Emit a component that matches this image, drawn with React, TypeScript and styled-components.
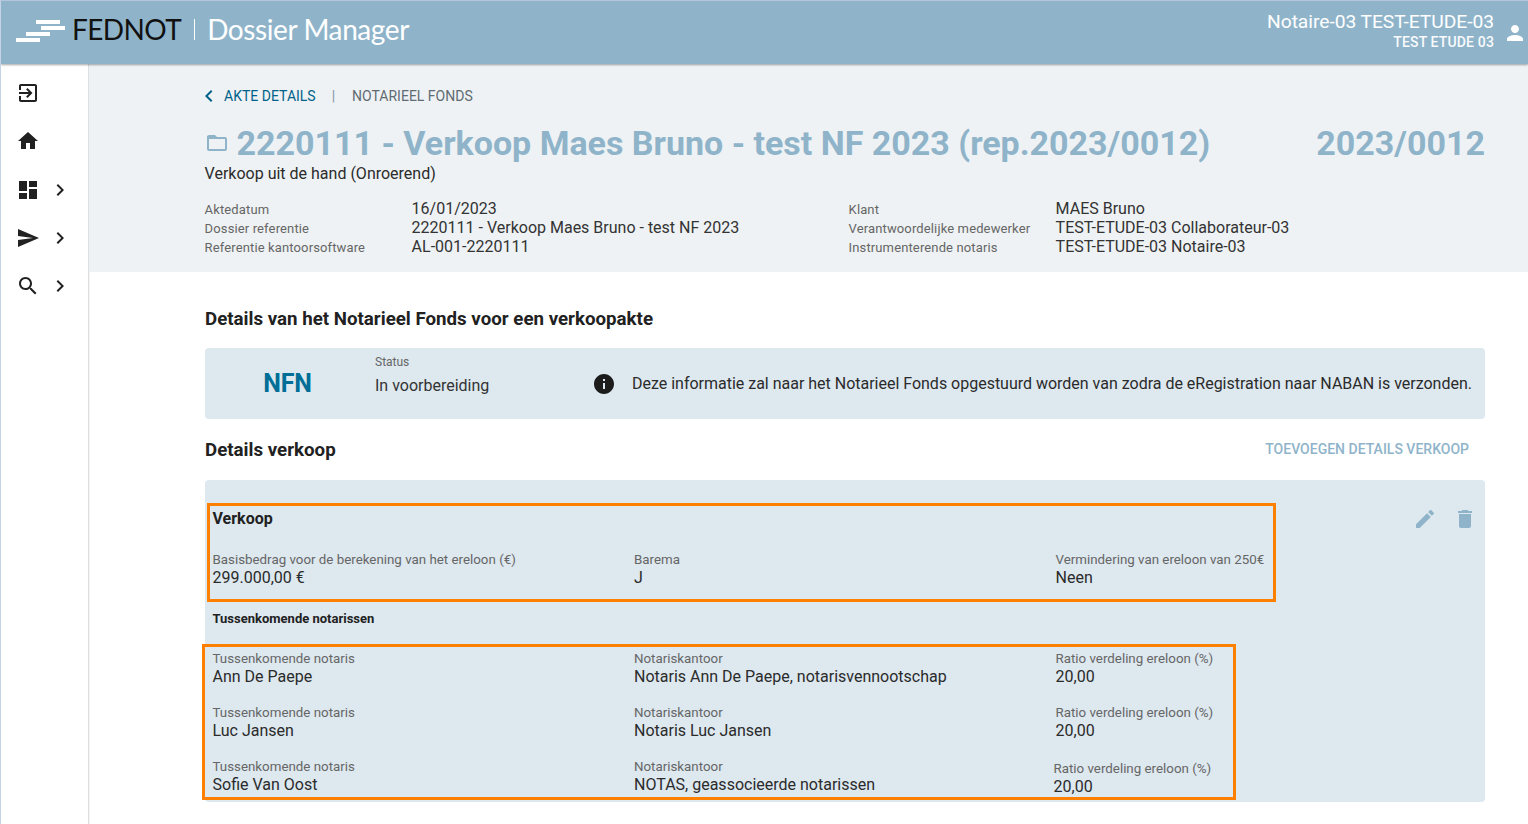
import React from 'react';
import styled, { createGlobalStyle } from 'styled-components';

const Global = createGlobalStyle`
  html, body { margin: 0; padding: 0; height: 100%; overflow: hidden; background: #fff; }
  body { font-family: Roboto, "Liberation Sans", sans-serif; color: #212121; }
  * { box-sizing: border-box; }
`;

const BLUE = '#8fb4ca';

const Page = styled.div`
  width: 1528px; height: 824px; display: flex; flex-direction: column;
  border-left: 1px solid #c5d3e6; border-top: 1px solid #b5c5dc; overflow: hidden;
`;
const Header = styled.header`
  height: 63px; flex: none; background: ${BLUE}; display: flex; align-items: center;
  justify-content: space-between; padding: 0 1px 0 15px; position: relative; z-index: 2;
  box-shadow: 0 1px 2px rgba(0,0,0,.35);
`;
const Brand = styled.div`display: flex; align-items: center; height: 100%;`;
const LogoMark = styled.svg`width: 49px; height: 22px; flex: none; margin-right: 7px; margin-top: -3px;`;
const Fednot = styled.span`
  font-family: Lato, sans-serif; font-size: 28px; font-weight: 400; color: #111; letter-spacing: -.6px; line-height: 1; margin-top: -7px;
`;
const Divider = styled.span`width: 1px; height: 21px; background: #fff; margin: -6px 12px 0 13px;`;
const Product = styled.span`
  font-family: Lato, sans-serif; font-size: 28px; font-weight: 400; color: #fff; letter-spacing: -.4px; line-height: 1; margin-top: -7px;
`;
const UserArea = styled.div`display: flex; align-items: center; gap: 8px; color: #fff;`;
const UserText = styled.div`display: flex; flex-direction: column; align-items: flex-end; margin-top: -2px; margin-right: 1px;`;
const UserName = styled.span`font-size: 19.25px; line-height: 22px; letter-spacing: -.05px;`;
const UserOrg = styled.span`font-size: 14px; line-height: 19px; font-weight: 500; opacity: .95; letter-spacing: .15px;`;

const Body = styled.div`flex: 1; display: flex; min-height: 0;`;
const Sidebar = styled.nav`
  width: 88px; flex: none; border-right: 1px solid #dcdfe1; padding-top: 5px;
  display: flex; flex-direction: column; box-shadow: 1px 0 1px rgba(0,0,0,.04);
`;
const NavItem = styled.div`
  height: 48.3px; display: flex; align-items: center; padding-left: 15px; gap: 8px; color: #212121;
`;
const Main = styled.main`flex: 1; min-width: 0; display: flex; flex-direction: column;`;
const Band = styled.section`
  background: #eef2f4; height: 208px; padding: 21px 43px 0 115.6px; display: flex; flex-direction: column; flex: none;
`;
const Crumbs = styled.div`display: flex; align-items: center; height: 22px; font-size: 14px; color: #5f6b73;`;
const CrumbBack = styled.span`
  display: flex; align-items: center; color: #00628a; font-weight: 400; margin-left: -8px;
  svg { margin-right: 3.5px; }
`;
const CrumbSep = styled.span`margin: 0 17px 0 16px; color: #7f96a6;`;
const TitleRow = styled.div`display: flex; align-items: center; justify-content: space-between; margin-top: 16px; height: 40px; color: ${BLUE};`;
const TitleLeft = styled.div`display: flex; align-items: center;`;
const Title = styled.h1`margin: 0 0 0 8px; font-size: 34px; font-weight: 700; line-height: 40px; letter-spacing: -.01px;`;
const Rep = styled.div`font-size: 34px; font-weight: 700; line-height: 40px;`;
const Subtitle = styled.div`font-size: 16px; line-height: 20px; margin-top: 1px; color: #2b2b2b;`;
const MetaGrid = styled.div`display: grid; grid-template-columns: 644px 1fr; margin-top: 15px;`;
const MetaCol = styled.div`display: grid; grid-template-columns: 207px 1fr; grid-auto-rows: 19px; align-items: center;`;
const MetaLabel = styled.span`font-size: 13px; color: #666; letter-spacing: .13px; padding-top: 1px;`;
const MetaValue = styled.span`font-size: 16px; color: #333; white-space: nowrap;`;

const Content = styled.section`padding: 0 43px 0 116px; display: flex; flex-direction: column; flex: 1;`;
const SectionTitle = styled.h2`margin: 34px 0 0; font-size: 18.72px; font-weight: 700; line-height: 26px; color: #212121;`;
const StatusCard = styled.div`
  margin-top: 16px; height: 71px; background: #dde8ef; border-radius: 4px; display: flex; align-items: center;
`;
const NfnLogo = styled.div`width: 165px; text-align: center; font-size: 25px; font-weight: 700; color: #006e96; margin-top: -1px; letter-spacing: -.2px; margin-right: 5px;`;
const StatusBlock = styled.div`width: 205px; display: flex; flex-direction: column; margin-top: -18px;`;
const StatusLabel = styled.span`font-size: 12px; line-height: 16px; color: #666;`;
const StatusValue = styled.span`font-size: 16px; line-height: 20px; margin-top: 6px; color: #333;`;
const Notice = styled.div`display: flex; align-items: center; gap: 16px; font-size: 16px; color: #2b2b2b; white-space: nowrap; margin-left: 12px;`;
const NoticeText = styled.span`padding-bottom: 1px; letter-spacing: -.01px;`;
const RowHead = styled.div`display: flex; align-items: center; justify-content: space-between; height: 26px; margin-top: 18px;`;
const SubTitle = styled.h2`margin: 0; font-size: 18.72px; font-weight: 700; line-height: 26px;`;
const AddButton = styled.button`
  background: none; border: 0; padding: 0 16px 0 0; font: 500 14px Roboto, sans-serif; color: ${BLUE}; margin-top: -2px;
`;
const DetailCard = styled.div`
  position: relative; margin-top: 17px; height: 322px; background: #dde8ef; border-radius: 4px; padding: 0 7.5px;
`;
const CardHeading = styled.div`font-size: 16px; font-weight: 700; line-height: 20px; padding-top: 29px; color: #212121;`;
const FieldGrid = styled.div<{ $top: number }>`
  display: grid; grid-template-columns: 421.5px 421.5px 1fr; margin-top: ${p => p.$top}px;
`;
const Field = styled.div<{ $shift?: boolean }>`
  display: flex; flex-direction: column; transform: ${p => (p.$shift ? 'translate(-2px, 2px)' : 'none')};
`;
const FieldLabel = styled.span`font-size: 13.33px; line-height: 18px; color: #666;`;
const FieldValue = styled.span`font-size: 16px; line-height: 18px; color: #2b2b2b;`;
const SmallHeading = styled.div`font-size: 13px; font-weight: 700; line-height: 18px; margin-top: 23px; color: #212121;`;
const Actions = styled.div`position: absolute; top: 27px; right: 8px; display: flex; gap: 16px; color: ${BLUE};`;
const Highlight = styled.div<{ $l: number; $t: number; $w: number; $h: number }>`
  position: absolute; left: ${p => p.$l}px; top: ${p => p.$t}px; width: ${p => p.$w}px; height: ${p => p.$h}px;
  border: 3px solid #ff8000; pointer-events: none;
`;

const Icon = ({ d, size = 24, color = 'currentColor' }: { d: string; size?: number; color?: string }) => (
  <svg width={size} height={size} viewBox="0 0 24 24" fill={color} style={{ flex: 'none' }}><path d={d} /></svg>
);

const P = {
  exit: 'M10.09 15.59L11.5 17l5-5-5-5-1.41 1.41L12.67 11H3v2h9.67l-2.58 2.59zM19 3H5c-1.11 0-2 .9-2 2v4h2V5h14v14H5v-4H3v4c0 1.1.89 2 2 2h14c1.1 0 2-.9 2-2V5c0-1.1-.9-2-2-2z',
  home: 'M10 20v-6h4v6h5v-8h3L12 3 2 12h3v8z',
  dash: 'M3 13h8V3H3v10zm0 8h8v-6H3v6zm10 0h8V11h-8v10zm0-18v6h8V3h-8z',
  send: 'M2.01 21L23 12 2.01 3 2 10l15 2-15 2z',
  search: 'M15.5 14h-.79l-.28-.27C15.41 12.59 16 11.11 16 9.5 16 5.91 13.09 3 9.5 3S3 5.91 3 9.5 5.91 16 9.5 16c1.61 0 3.09-.59 4.23-1.57l.27.28v.79l5 4.99L20.49 19l-4.99-5zm-6 0C7.01 14 5 11.99 5 9.5S7.01 5 9.5 5 14 7.01 14 9.5 11.99 14 9.5 14z',
  right: 'M10 6L8.59 7.41 13.17 12l-4.58 4.59L10 18l6-6z',
  left: 'M15.41 7.41L14 6l-6 6 6 6 1.41-1.41L10.83 12z',
  edit: 'M3 17.25V21h3.75L17.81 9.94l-3.75-3.75L3 17.25zM20.71 7.04c.39-.39.39-1.02 0-1.41l-2.34-2.34c-.39-.39-1.02-.39-1.41 0l-1.83 1.83 3.75 3.75 1.83-1.83z',
  del: 'M6 19c0 1.1.9 2 2 2h8c1.1 0 2-.9 2-2V7H6v12zM19 4h-3.5l-1-1h-5l-1 1H5v2h14V4z',
  person: 'M12 12c2.21 0 4-1.79 4-4s-1.79-4-4-4-4 1.79-4 4 1.79 4 4 4zm0 2c-2.67 0-8 1.34-8 4v2h16v-2c0-2.66-5.33-4-8-4z',
  folder: 'M20 6h-8l-2-2H4c-1.1 0-1.99.9-1.99 2L2 18c0 1.1.9 2 2 2h16c1.1 0 2-.9 2-2V8c0-1.1-.9-2-2-2zm0 12H4V8h16v10z',
  info: 'M12 2C6.48 2 2 6.48 2 12s4.48 10 10 10 10-4.48 10-10S17.52 2 12 2zm1 15h-2v-6h2v6zm0-8h-2V7h2v2z',
};

const notaries = [
  ['Ann De Paepe', 'Notaris Ann De Paepe, notarisvennootschap', false],
  ['Luc Jansen', 'Notaris Luc Jansen', false],
  ['Sofie Van Oost', 'NOTAS, geassocieerde notarissen', true],
] as const;

export default function App() {
  return (
    <Page>
      <Global />
      <Header>
        <Brand>
          <LogoMark viewBox="0 0 49 22" fill="#fff">
            <rect x="20" y="0" width="24" height="4" />
            <rect x="25" y="6" width="24" height="4" />
            <rect x="10" y="12" width="24" height="4" />
            <rect x="0" y="18" width="24" height="4" />
          </LogoMark>
          <Fednot>FEDNOT</Fednot>
          <Divider />
          <Product>Dossier Manager</Product>
        </Brand>
        <UserArea>
          <UserText>
            <UserName>Notaire-03 TEST-ETUDE-03</UserName>
            <UserOrg>TEST ETUDE 03</UserOrg>
          </UserText>
          <Icon d={P.person} color="#fff" />
        </UserArea>
      </Header>
      <Body>
        <Sidebar>
          <NavItem><Icon d={P.exit} /></NavItem>
          <NavItem><Icon d={P.home} /></NavItem>
          <NavItem><Icon d={P.dash} /><Icon d={P.right} /></NavItem>
          <NavItem><Icon d={P.send} /><Icon d={P.right} /></NavItem>
          <NavItem><Icon d={P.search} /><Icon d={P.right} /></NavItem>
        </Sidebar>
        <Main>
          <Band>
            <Crumbs>
              <CrumbBack><Icon d={P.left} size={24} />AKTE DETAILS</CrumbBack>
              <CrumbSep>|</CrumbSep>
              <span>NOTARIEEL FONDS</span>
            </Crumbs>
            <TitleRow>
              <TitleLeft>
                <Icon d={P.folder} size={24} />
                <Title>2220111 - Verkoop Maes Bruno - test NF 2023 (rep.2023/0012)</Title>
              </TitleLeft>
              <Rep>2023/0012</Rep>
            </TitleRow>
            <Subtitle>Verkoop uit de hand (Onroerend)</Subtitle>
            <MetaGrid>
              <MetaCol>
                <MetaLabel>Aktedatum</MetaLabel><MetaValue>16/01/2023</MetaValue>
                <MetaLabel>Dossier referentie</MetaLabel><MetaValue>2220111 - Verkoop Maes Bruno - test NF 2023</MetaValue>
                <MetaLabel>Referentie kantoorsoftware</MetaLabel><MetaValue>AL-001-2220111</MetaValue>
              </MetaCol>
              <MetaCol>
                <MetaLabel>Klant</MetaLabel><MetaValue>MAES Bruno</MetaValue>
                <MetaLabel>Verantwoordelijke medewerker</MetaLabel><MetaValue>TEST-ETUDE-03 Collaborateur-03</MetaValue>
                <MetaLabel>Instrumenterende notaris</MetaLabel><MetaValue>TEST-ETUDE-03 Notaire-03</MetaValue>
              </MetaCol>
            </MetaGrid>
          </Band>
          <Content>
            <SectionTitle>Details van het Notarieel Fonds voor een verkoopakte</SectionTitle>
            <StatusCard>
              <NfnLogo>NFN</NfnLogo>
              <StatusBlock>
                <StatusLabel>Status</StatusLabel>
                <StatusValue>In voorbereiding</StatusValue>
              </StatusBlock>
              <Notice>
                <Icon d={P.info} color="#1c1c1c" />
                <NoticeText>Deze informatie zal naar het Notarieel Fonds opgestuurd worden van zodra de eRegistration naar NABAN is verzonden.</NoticeText>
              </Notice>
            </StatusCard>
            <RowHead>
              <SubTitle>Details verkoop</SubTitle>
              <AddButton>TOEVOEGEN DETAILS VERKOOP</AddButton>
            </RowHead>
            <DetailCard>
              <CardHeading>Verkoop</CardHeading>
              <FieldGrid $top={22}>
                <Field><FieldLabel>Basisbedrag voor de berekening van het ereloon (€)</FieldLabel><FieldValue>299.000,00 €</FieldValue></Field>
                <Field><FieldLabel>Barema</FieldLabel><FieldValue>J</FieldValue></Field>
                <Field><FieldLabel>Vermindering van ereloon van 250€</FieldLabel><FieldValue>Neen</FieldValue></Field>
              </FieldGrid>
              <SmallHeading>Tussenkomende notarissen</SmallHeading>
              {notaries.map(([name, office, shift], i) => (
                <FieldGrid $top={i === 0 ? 22 : 18} key={name}>
                  <Field><FieldLabel>Tussenkomende notaris</FieldLabel><FieldValue>{name}</FieldValue></Field>
                  <Field><FieldLabel>Notariskantoor</FieldLabel><FieldValue>{office}</FieldValue></Field>
                  <Field $shift={shift}><FieldLabel>Ratio verdeling ereloon (%)</FieldLabel><FieldValue>20,00</FieldValue></Field>
                </FieldGrid>
              ))}
              <Actions>
                <Icon d={P.edit} />
                <Icon d={P.del} />
              </Actions>
              <Highlight $l={2} $t={23} $w={1069} $h={99} />
              <Highlight $l={-3} $t={164} $w={1034} $h={156} />
            </DetailCard>
          </Content>
        </Main>
      </Body>
    </Page>
  );
}
